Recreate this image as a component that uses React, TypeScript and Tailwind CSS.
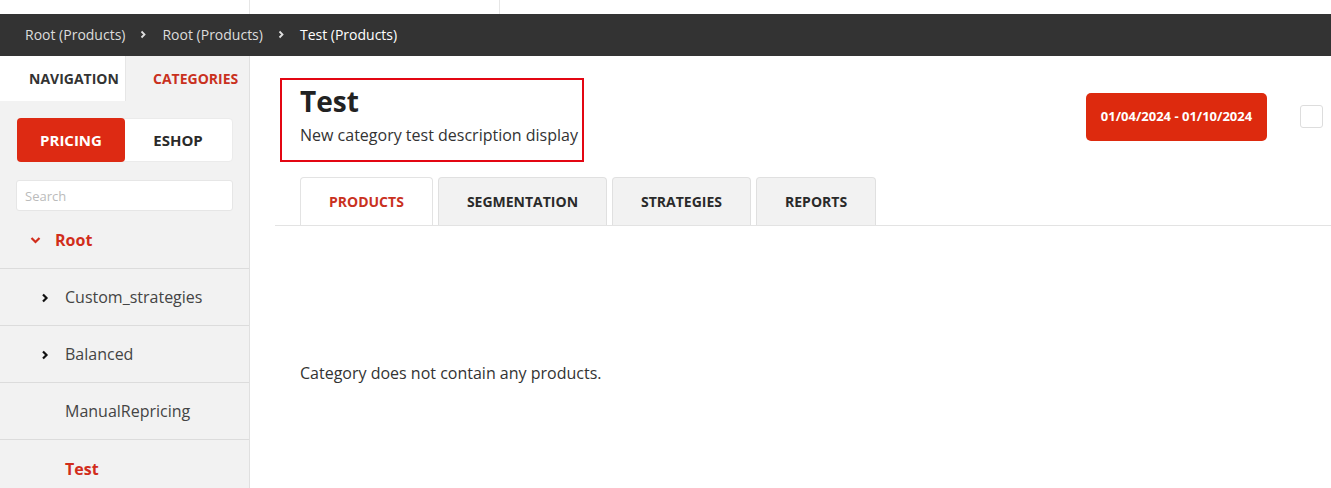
import React from 'react';

const tabs = ['Products', 'Segmentation', 'Strategies', 'Reports'];

const tree = [
  { name: 'Custom_strategies', children: true },
  { name: 'Balanced', children: true },
  { name: 'ManualRepricing', children: false },
];

const ChevronRight = () => (
  <svg width="8" height="10" viewBox="0 0 8 10" className="shrink-0">
    <path d="M2 1.5 L5.5 5 L2 8.5" fill="none" stroke="#111" strokeWidth="2.2" />
  </svg>
);

const ChevronDown = () => (
  <svg width="11" height="8" viewBox="0 0 11 8" className="shrink-0">
    <path d="M1.5 2 L5.5 6 L9.5 2" fill="none" stroke="#d12d1b" strokeWidth="2.2" />
  </svg>
);

const Crumb = () => (
  <svg width="7" height="9" viewBox="0 0 7 9" className="ml-[15px] mr-[15px] mt-[1px]">
    <path d="M1.5 1.5 L4.5 4.5 L1.5 7.5" fill="none" stroke="#e0e0e0" strokeWidth="1.8" />
  </svg>
);

const Sidebar: React.FC = () => (
  <aside className="w-[250px] shrink-0 bg-[#f2f2f2] border-r border-[#e0e0e0]">
    <div className="flex h-[45px] text-[14px] font-bold uppercase">
      <div className="w-[126px] bg-white flex items-center pl-[29px] text-[#333] border-r border-[#e6e6e6]">Navigation</div>
      <div className="flex-1 flex items-center pl-[27px] text-[#c9311e]">Categories</div>
    </div>
    <div className="px-[16px] pt-[17px]">
      <div className="flex h-[44px] ml-[1px] rounded-[4px] bg-white border border-[#ebebeb] text-[15px] font-bold uppercase">
        <div className="w-[108px] -m-px rounded-[4px] bg-[#dd2a13] text-white flex items-center justify-center">Pricing</div>
        <div className="flex-1 flex items-center justify-center text-[#2a2a2a]">Eshop</div>
      </div>
      <input
        placeholder="Search"
        className="mt-[18px] w-full h-[31px] bg-white border border-[#e6e6e6] rounded-[3px] px-[8px] text-[13px] text-[#333] placeholder:text-[#bbb] outline-none"
      />
    </div>
    <div className="flex items-center h-[57px] mt-[1px] pl-[30px] gap-[14px] border-b border-[#dcdcdc]">
      <ChevronDown />
      <span className="text-[16px] font-bold text-[#d12d1b]">Root</span>
    </div>
    {tree.map(item => (
      <div key={item.name} className="flex items-center h-[57px] border-b border-[#dcdcdc] pl-[41px]">
        <div className="w-[24px] flex mt-[2px]">{item.children && <ChevronRight />}</div>
        <span className="text-[16px] text-[#444]">{item.name}</span>
      </div>
    ))}
    <div className="flex items-center h-[57px] pl-[65px]">
      <span className="text-[16px] font-bold text-[#d12d1b]">Test</span>
    </div>
  </aside>
);

const App: React.FC = () => {
  return (
    <div className="w-[1331px] h-[488px] overflow-hidden bg-white font-['Open_Sans',sans-serif]">
      <div className="flex h-[14px]">
        <div className="w-[250px] border-r border-[#e6e6e6]" />
        <div className="w-[250px] border-r border-[#e6e6e6]" />
      </div>
      <div className="h-[42px] bg-[#333333] flex items-center pl-[25px] pb-[2px] text-[14px] text-[#dcdcdc]">
        <span>Root (Products)</span>
        <Crumb />
        <span>Root (Products)</span>
        <Crumb />
        <span className="text-white">Test (Products)</span>
      </div>
      <div className="flex h-[432px]">
        <Sidebar />
        <main className="flex-1 pl-[25px]">
          <div className="flex items-start">
            <div className="mt-[22px] ml-[5px] w-[304px] h-[84px] border-2 border-[#e30613] pl-[18px] pt-[3px]">
              <h1 className="text-[28px] leading-[36px] font-bold text-[#222]">Test</h1>
              <p className="text-[16px] leading-[22px] mt-[5px] text-[#333] whitespace-nowrap">New category test description display</p>
            </div>
            <button className="ml-auto mt-[37px] w-[181px] h-[48px] rounded-[5px] bg-[#dd2a0e] text-white text-[13px] font-bold">
              01/04/2024 - 01/10/2024
            </button>
            <div className="mt-[49px] ml-[33px] mr-[8px] w-[23px] h-[23px] rounded-[3px] border border-[#dddddd] bg-white" />
          </div>
          <div className="mt-[16px] flex items-end gap-[5px] pl-[25px] border-b border-[#e3e3e3] h-[48px]">
            {tabs.map((t, i) => (
              <div
                key={t}
                className={
                  i === 0
                    ? 'h-[48px] px-[28px] pb-[1px] flex items-center rounded-t-[4px] border border-b-0 border-[#e3e3e3] bg-white text-[14px] font-bold uppercase text-[#c9311e]'
                    : 'h-[48px] px-[28px] pb-[1px] flex items-center rounded-t-[4px] border border-b-0 border-[#e0e0e0] bg-[#f2f2f2] text-[14px] font-bold uppercase text-[#2a2a2a]'
                }
              >
                {t}
              </div>
            ))}
          </div>
          <p className="mt-[135px] pl-[25px] text-[16px] text-[#333]">Category does not contain any products.</p>
        </main>
      </div>
    </div>
  );
};

export default App;
